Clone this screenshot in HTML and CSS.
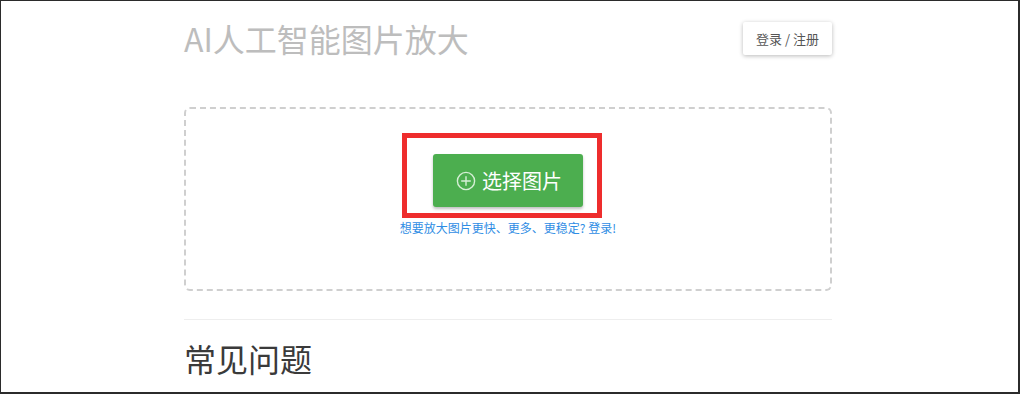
FILE: index.html
```html
<!DOCTYPE html>
<html lang="zh-CN">
<head>
<meta charset="utf-8">
<title>AI人工智能图片放大</title>
<link rel="stylesheet" href="styles.css">
</head>
<body>
<div class="frame">
  <div class="page">
    <header class="header">
      <h1 class="title">AI人工智能图片放大</h1>
      <button class="login">登录 / 注册</button>
    </header>
    <section class="upload">
      <div class="pick-wrap">
        <button class="pick">
          <svg class="pick-icon" width="20" height="20" viewBox="0 0 20 20">
            <circle cx="10" cy="10" r="8.6" fill="none" stroke="currentColor" stroke-width="1.4"/>
            <path d="M10 5.2V14.8M5.2 10H14.8" stroke="currentColor" stroke-width="1.4"/>
          </svg>
          <span>选择图片</span>
        </button>
        <div class="highlight"></div>
      </div>
      <a class="hint" href="#">想要放大图片更快、更多、更稳定? 登录!</a>
    </section>
    <hr class="divider">
    <h2 class="faq">常见问题</h2>
  </div>
</div>
</body>
</html>
```
FILE: styles.css
```css
html, body {
  margin: 0;
  padding: 0;
  background: #fff;
}
body {
  font-family: "Noto Sans CJK SC", "Noto Sans", sans-serif;
}
.frame {
  box-sizing: border-box;
  width: 1020px;
  height: 394px;
  border: 2px solid #2b2b2b;
  border-top-width: 1px;
  border-left-width: 1px;
  overflow: hidden;
  background: #fff;
}
.page {
  width: 648px;
  margin-left: 183px;
  display: flex;
  flex-direction: column;
}
.header {
  display: flex;
  align-items: center;
  justify-content: space-between;
  height: 48px;
  margin-top: 13px;
}
.title {
  margin: 0;
  font-size: 32px;
  font-weight: 400;
  line-height: 48px;
  color: #bdbdbd;
}
.login {
  width: 89px;
  height: 33px;
  border: none;
  border-radius: 2px;
  background: #fff;
  box-shadow: 0 1px 4px rgba(0, 0, 0, 0.28);
  font-family: inherit;
  font-size: 13px;
  color: #555;
  padding: 0;
}
.upload {
  margin-top: 45px;
  height: 184px;
  box-sizing: border-box;
  border: 2px dashed #cfcfcf;
  border-radius: 6px;
  display: flex;
  flex-direction: column;
  align-items: center;
  padding-top: 45px;
}
.pick-wrap {
  position: relative;
}
.pick {
  width: 150px;
  height: 53px;
  border: none;
  border-radius: 3px;
  background: #4cae4f;
  box-shadow: 0 2px 3px rgba(0, 0, 0, 0.25);
  color: #fff;
  font-family: inherit;
  font-size: 20px;
  display: flex;
  align-items: center;
  justify-content: center;
  gap: 6px;
  padding: 0 0 0 2px;
}
.pick-icon {
  color: #d6efd6;
}
.highlight {
  position: absolute;
  left: -31px;
  top: -21px;
  width: 200px;
  height: 85px;
  box-sizing: border-box;
  border: 5px solid #ee2d2d;
  pointer-events: none;
}
.hint {
  margin-top: 13px;
  font-size: 12px;
  line-height: 16px;
  color: #2f8de4;
  text-decoration: none;
}
.divider {
  margin: 28px 0 0;
  border: none;
  border-top: 1px solid #eeeeee;
  height: 0;
}
.faq {
  margin: 14px 0 0;
  font-size: 32px;
  font-weight: 400;
  line-height: 48px;
  color: #3a3a3a;
}
```
